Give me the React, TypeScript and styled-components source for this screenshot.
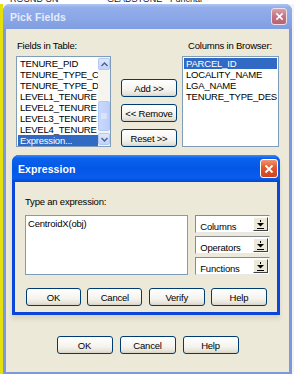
import styled, { createGlobalStyle } from "styled-components";

const GlobalStyle = createGlobalStyle`
  body {
    margin: 0;
    background: #ffffff;
    font-family: "Liberation Sans", Arial, sans-serif;
  }
`;

const Screen = styled.div`
  width: 294px;
  height: 374px;
  overflow: hidden;
  display: flex;
  flex-direction: column;
  background: #f4f4f4;
`;

// bottom edge of the window lying behind the dialog
const BackStrip = styled.div`
  height: 4px;
  overflow: hidden;
  background: #ffffff;
  display: flex;
  font-size: 9px;
  line-height: 10px;
  color: #202020;

  span {
    margin-top: -6px;
  }
`;

const BackCell = styled.span<{ $w: number }>`
  width: ${(p) => p.$w}px;
  flex: none;
`;

const Desk = styled.div`
  display: flex;
  flex: 1;
  min-height: 0;
`;

const YellowEdge = styled.div`
  width: 3px;
  background: #e4e010;
  flex: none;
`;

const Window = styled.div`
  width: 289px;
  height: 372px;
  flex: none;
  display: flex;
  flex-direction: column;
  background: #7c99e0;
  border-radius: 7px 7px 0 0;
`;

const TitleBar = styled.div<{ $active?: boolean }>`
  height: ${(p) => (p.$active ? 27 : 25)}px;
  flex: none;
  display: flex;
  align-items: center;
  justify-content: space-between;
  padding: 0 ${(p) => (p.$active ? 2 : 5)}px 0 ${(p) => (p.$active ? 6 : 7)}px;
  border-radius: 7px 7px 0 0;
  background: ${(p) =>
    p.$active
      ? "linear-gradient(#3c8cf8 0%, #0a62ee 12%, #0457e6 50%, #0a5cec 85%, #0048d0 100%)"
      : "linear-gradient(#b0c6f2 0%, #93aeea 14%, #8aa6e6 60%, #7f9de0 100%)"};
  color: ${(p) => (p.$active ? "#ffffff" : "#e4ecfa")};
  font-weight: bold;
  font-size: 10.5px;
  letter-spacing: 0.1px;
`;

const CloseBox = styled.div<{ $active?: boolean }>`
  width: ${(p) => (p.$active ? 18 : 16)}px;
  height: ${(p) => (p.$active ? 19 : 17)}px;
  box-sizing: border-box;
  border-radius: 3px;
  border: 1px solid ${(p) => (p.$active ? "#ffffff" : "#f2dfe3")};
  background: ${(p) =>
    p.$active
      ? "linear-gradient(#f4946e, #e2572e 45%, #cc4620)"
      : "linear-gradient(#d8a0aa, #c47382 50%, #b86272)"};
  display: flex;
  align-items: center;
  justify-content: center;
`;

const Body = styled.div`
  flex: 1;
  margin: 0 3px 4px 3px;
  background: #ece9d8;
  display: flex;
  flex-direction: column;
  padding: 11px 10px 14px 10px;
  font-size: 9.5px;
  color: #000000;
`;

const FieldsRow = styled.div`
  display: flex;
  align-items: flex-end;
`;

const Column = styled.div<{ $w: number }>`
  width: ${(p) => p.$w}px;
  display: flex;
  flex-direction: column;
  flex: none;
`;

const Label = styled.div<{ $indent?: number; $gap?: number }>`
  height: 12px;
  line-height: 12px;
  margin-bottom: ${(p) => p.$gap ?? 4}px;
  padding-left: ${(p) => p.$indent ?? 0}px;
  white-space: nowrap;
  letter-spacing: -0.2px;
`;

const ListBox = styled.div`
  height: 91px;
  box-sizing: border-box;
  border: 1px solid #7f9db9;
  background: #ffffff;
  display: flex;
  padding: 1px 1px 0 1px;
`;

const Items = styled.div`
  flex: 1;
  min-width: 0;
  overflow: hidden;
`;

const Item = styled.div<{ $selected?: boolean }>`
  height: 11px;
  line-height: 11px;
  padding-left: 2px;
  white-space: nowrap;
  overflow: hidden;
  letter-spacing: -0.2px;
  background: ${(p) => (p.$selected ? "#316ac5" : "transparent")};
  color: ${(p) => (p.$selected ? "#ffffff" : "#000000")};
`;

const ScrollBar = styled.div`
  width: 12px;
  flex: none;
  display: flex;
  flex-direction: column;
  background: #f5f4ef;
  margin: -1px -1px 0 0;
  padding: 1px 0;
`;

const ScrollButton = styled.div<{ $thumb?: boolean }>`
  height: ${(p) => (p.$thumb ? 30 : 12)}px;
  box-sizing: border-box;
  border: 1px solid #b4c8f6;
  border-radius: 2px;
  background: ${(p) =>
    p.$thumb
      ? "linear-gradient(90deg, #c9d8fc, #bccffb)"
      : "linear-gradient(#dde8fe, #c1d3fb)"};
  display: flex;
  align-items: center;
  justify-content: center;
  margin-top: ${(p) => (p.$thumb ? "auto" : "0")};
  margin-bottom: ${(p) => (p.$thumb ? 2 : 0)}px;
`;

const ButtonStack = styled.div`
  display: flex;
  flex-direction: column;
  gap: 7px;
  width: 56px;
  margin: 0 5px 0 10px;
  flex: none;
`;

const XPButton = styled.button<{ $w?: number }>`
  width: ${(p) => p.$w ?? 56}px;
  height: 18px;
  padding: 0;
  box-sizing: border-box;
  border: 1px solid #003c74;
  border-radius: 3px;
  background: linear-gradient(#ffffff, #f4f3ee 60%, #e6e3d8 88%, #d6d0c5);
  font-family: "Liberation Sans", Arial, sans-serif;
  font-size: 9.5px;
  letter-spacing: -0.2px;
  color: #000000;
  flex: none;
`;

const Dialog = styled.div`
  height: 160px;
  margin: 8px -1px 0 -4px;
  display: flex;
  flex-direction: column;
  background: #0b46d8;
  border-radius: 7px 7px 0 0;
  box-shadow: 0 4px 4px rgba(120, 120, 110, 0.18);
  flex: none;
`;

const DialogBody = styled.div`
  flex: 1;
  margin: 0 3px 3px 3px;
  background: #ece9d8;
  padding: 14px 7px 6px 10px;
  display: flex;
  flex-direction: column;
`;

const EditRow = styled.div`
  display: flex;
  gap: 7px;
  margin-top: 7px;
`;

const TextArea = styled.div`
  width: 170px;
  height: 60px;
  box-sizing: border-box;
  border: 1px solid #7f9db9;
  background: #ffffff;
  padding: 2px 2px;
  line-height: 11px;
  letter-spacing: -0.2px;
`;

const ComboStack = styled.div`
  display: flex;
  flex-direction: column;
  gap: 3px;
  width: 78px;
`;

const Combo = styled.div`
  height: 18px;
  box-sizing: border-box;
  border: 1px solid #8a8a8a;
  border-right-color: #e8e8e8;
  border-bottom-color: #e8e8e8;
  background: #ffffff;
  display: flex;
  align-items: stretch;
`;

const ComboText = styled.div`
  flex: 1;
  padding: 5px 0 0 4px;
  line-height: 11px;
  letter-spacing: -0.2px;
`;

const ComboButton = styled.div`
  width: 15px;
  box-sizing: border-box;
  margin: 1px;
  background: #ece9d8;
  border: 1px solid;
  border-color: #ffffff #404040 #404040 #ffffff;
  display: flex;
  align-items: center;
  justify-content: center;
`;

const ButtonRow = styled.div<{ $gap?: number }>`
  display: flex;
  justify-content: ${(p) => (p.$gap ? "center" : "space-between")};
  gap: ${(p) => p.$gap ?? 0}px;
`;

const DialogButtons = styled(ButtonRow)`
  margin: 13px 3px 0 1px;
`;

const MainButtons = styled(ButtonRow)`
  margin-top: 21px;
`;

function CloseX({ size }: { size: number }) {
  return (
    <svg width={size} height={size} viewBox="0 0 10 10">
      <path d="M1.5 1.5 L8.5 8.5 M8.5 1.5 L1.5 8.5" stroke="#ffffff" strokeWidth="1.8" />
    </svg>
  );
}

function Arrow({ up }: { up?: boolean }) {
  return (
    <svg width="7" height="5" viewBox="0 0 7 5">
      <path
        d={up ? "M0.5 4 L3.5 1 L6.5 4" : "M0.5 1 L3.5 4 L6.5 1"}
        fill="none"
        stroke="#4d6185"
        strokeWidth="1.4"
      />
    </svg>
  );
}

function Grip() {
  return (
    <svg width="6" height="6" viewBox="0 0 6 6">
      <path d="M0 1 H6 M0 3 H6 M0 5 H6" stroke="#eef3fe" strokeWidth="1" />
    </svg>
  );
}

function DropGlyph() {
  return (
    <svg width="7" height="9" viewBox="0 0 7 9">
      <rect x="3" y="0" width="1" height="2" fill="#000" />
      <path d="M0 3 H7 L3.5 6.5 Z" fill="#000" />
      <rect x="0" y="8" width="7" height="1" fill="#000" />
    </svg>
  );
}

const leftFields = [
  "TENURE_PID",
  "TENURE_TYPE_C",
  "TENURE_TYPE_D",
  "LEVEL1_TENURE",
  "LEVEL2_TENURE",
  "LEVEL3_TENURE",
  "LEVEL4_TENURE",
  "Expression...",
];

const browserColumns = ["PARCEL_ID", "LOCALITY_NAME", "LGA_NAME", "TENURE_TYPE_DES"];

export default function App() {
  return (
    <>
      <GlobalStyle />
      <Screen>
        <BackStrip>
          <BackCell $w={10} />
          <BackCell $w={97}>ROUND UN</BackCell>
          <BackCell $w={63}>GLADSTONE</BackCell>
          <BackCell $w={80}>Funchal</BackCell>
        </BackStrip>
        <Desk>
          <YellowEdge />
          <Window>
            <TitleBar>
              <span>Pick Fields</span>
              <CloseBox>
                <CloseX size={9} />
              </CloseBox>
            </TitleBar>
            <Body>
              <FieldsRow>
                <Column $w={95}>
                  <Label $indent={1}>Fields in Table:</Label>
                  <ListBox>
                    <Items>
                      {leftFields.map((f) => (
                        <Item key={f} $selected={f === "Expression..."}>
                          {f}
                        </Item>
                      ))}
                    </Items>
                    <ScrollBar>
                      <ScrollButton>
                        <Arrow up />
                      </ScrollButton>
                      <ScrollButton $thumb>
                        <Grip />
                      </ScrollButton>
                      <ScrollButton>
                        <Arrow />
                      </ScrollButton>
                    </ScrollBar>
                  </ListBox>
                </Column>
                <ButtonStack>
                  <XPButton>Add &gt;&gt;</XPButton>
                  <XPButton>&lt;&lt; Remove</XPButton>
                  <XPButton>Reset &gt;&gt;</XPButton>
                </ButtonStack>
                <Column $w={97}>
                  <Label $indent={6}>Columns in Browser:</Label>
                  <ListBox>
                    <Items>
                      {browserColumns.map((c) => (
                        <Item key={c} $selected={c === "PARCEL_ID"}>
                          {c}
                        </Item>
                      ))}
                    </Items>
                  </ListBox>
                </Column>
              </FieldsRow>

              <Dialog>
                <TitleBar $active>
                  <span>Expression</span>
                  <CloseBox $active>
                    <CloseX size={10} />
                  </CloseBox>
                </TitleBar>
                <DialogBody>
                  <Label $gap={0}>Type an expression:</Label>
                  <EditRow>
                    <TextArea>CentroidX(obj)</TextArea>
                    <ComboStack>
                      {["Columns", "Operators", "Functions"].map((c) => (
                        <Combo key={c}>
                          <ComboText>{c}</ComboText>
                          <ComboButton>
                            <DropGlyph />
                          </ComboButton>
                        </Combo>
                      ))}
                    </ComboStack>
                  </EditRow>
                  <DialogButtons>
                    <XPButton $w={55}>OK</XPButton>
                    <XPButton $w={55}>Cancel</XPButton>
                    <XPButton $w={56}>Verify</XPButton>
                    <XPButton $w={56}>Help</XPButton>
                  </DialogButtons>
                </DialogBody>
              </Dialog>

              <MainButtons $gap={7}>
                <XPButton>OK</XPButton>
                <XPButton>Cancel</XPButton>
                <XPButton>Help</XPButton>
              </MainButtons>
            </Body>
          </Window>
        </Desk>
      </Screen>
    </>
  );
}
